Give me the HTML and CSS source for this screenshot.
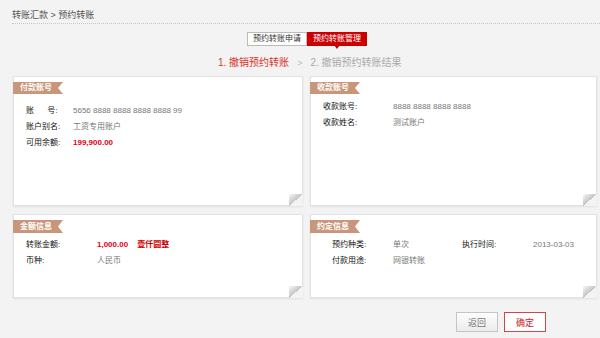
FILE: index.html
```html
<!DOCTYPE html>
<html lang="zh">
<head>
<meta charset="utf-8">
<title>预约转账</title>
<link rel="stylesheet" href="styles.css">
</head>
<body>
<div class="page">
  <div class="crumb">转账汇款 &gt; 预约转账</div>
  <div class="tabs">
    <span class="tab">预约转账申请</span>
    <span class="tab active">预约转账管理</span>
  </div>
  <div class="steps">
    <span class="cur">1. 撤销预约转账</span>
    <span class="sep">&gt;</span>
    <span>2. 撤销预约转账结果</span>
  </div>
  <div class="grid">
    <div class="card c1">
      <div class="ribbon">付款账号</div>
      <div class="rows">
        <div class="row"><span class="lab">账&nbsp;&nbsp;&nbsp;&nbsp;&nbsp;&nbsp;号:</span><span class="val">5656 8888 8888 8888 8888 99</span></div>
        <div class="row"><span class="lab">账户别名:</span><span class="val">工资专用账户</span></div>
        <div class="row"><span class="lab">可用余额:</span><span class="val red">199,900.00</span></div>
      </div>
    </div>
    <div class="card c2">
      <div class="ribbon">收款账号</div>
      <div class="rows">
        <div class="row"><span class="lab">收款账号:</span><span class="val">8888 8888 8888 8888</span></div>
        <div class="row"><span class="lab">收款姓名:</span><span class="val">测试账户</span></div>
      </div>
    </div>
    <div class="card c3">
      <div class="ribbon">金额信息</div>
      <div class="rows">
        <div class="row"><span class="lab">转账金额:</span><span class="val red">1,000.00</span><span class="val red cn">壹仟圆整</span></div>
        <div class="row"><span class="lab">币种:</span><span class="val">人民币</span></div>
      </div>
    </div>
    <div class="card c4">
      <div class="ribbon">约定信息</div>
      <div class="rows">
        <div class="row"><span class="lab">预约种类:</span><span class="val v1">单次</span><span class="lab">执行时间:</span><span class="val">2013-03-03</span></div>
        <div class="row"><span class="lab">付款用途:</span><span class="val v1">网银转账</span></div>
      </div>
    </div>
  </div>
  <div class="actions">
    <button class="btn back">返回</button>
    <button class="btn ok">确定</button>
  </div>
</div>
</body>
</html>
```
FILE: styles.css
```css
html, body {
  margin: 0;
  padding: 0;
  background: #f3f3f3;
}
body {
  font-family: "Liberation Sans", "Noto Sans CJK SC", sans-serif;
  width: 600px;
  height: 338px;
  overflow: hidden;
}
.page {
  display: flex;
  flex-direction: column;
}
.crumb {
  margin-left: 12px;
  height: 23px;
  line-height: 30px;
  font-size: 9px;
  color: #555;
  border-bottom: 1px dotted #c8c8c8;
}
.tabs {
  display: flex;
  margin: 8px 0 0 247px;
}
.tab {
  height: 12px;
  line-height: 12px;
  font-size: 8px;
  color: #333;
  background: #fff;
  border: 1px solid #bbb;
  padding: 0 5px;
  position: relative;
}
.tab.active {
  background: #cc0000;
  border-color: #cc0000;
  color: #fff;
}
.tab.active::after {
  content: "";
  position: absolute;
  left: 50%;
  bottom: -4px;
  margin-left: -3px;
  border-left: 3px solid transparent;
  border-right: 3px solid transparent;
  border-top: 4px solid #cc0000;
}
.steps {
  display: flex;
  gap: 8px;
  margin: 10px 0 0 218px;
  height: 14px;
  line-height: 14px;
  font-size: 10px;
  color: #aaa;
}
.steps .cur { color: #d8332a; }
.steps .sep { color: #bbb; font-size: 9px; }
.grid {
  display: grid;
  grid-template-columns: 290px 287px;
  grid-template-rows: 130px 84px;
  column-gap: 7px;
  row-gap: 8px;
  margin: 6px 0 0 13px;
}
.card {
  position: relative;
  background: #fff;
  border: 1px solid #e3e3e3;
  box-shadow: 0 1px 2px rgba(0,0,0,0.08);
  box-sizing: border-box;
  padding-top: 5px;
  font-size: 8px;
}
.card::after {
  content: "";
  position: absolute;
  right: -1px;
  bottom: -1px;
  width: 14px;
  height: 12px;
  background: linear-gradient(to top left, #f3f3f3 0, #f3f3f3 50%, #c4c4c4 50%, #e8e8e8 85%, #f9f9f9 100%);
}
.ribbon {
  width: 43px;
  height: 12px;
  line-height: 12px;
  margin-left: -1px;
  padding-left: 7px;
  background: #c8967b;
  color: #fff;
  font-weight: bold;
  font-size: 8px;
  clip-path: polygon(0 0, 100% 0, calc(100% - 5px) 50%, 100% 100%, 0 100%);
}
.rows {
  display: flex;
  flex-direction: column;
}
.row {
  display: flex;
  height: 16px;
  line-height: 16px;
  white-space: nowrap;
}
.lab {
  color: #111;
}
.val {
  color: #777;
}
.red {
  color: #e0001b;
  font-weight: bold;
}
.c1 .rows { margin: 9px 0 0 12px; }
.c1 .lab { width: 47px; }
.c2 .rows { margin: 5px 0 0 12px; }
.c2 .lab { width: 70px; }
.c3 .ribbon, .c4 .ribbon { height: 13px; line-height: 13px; }
.c3 .rows { margin: 4px 0 0 12px; }
.c3 .lab { width: 71px; }
.c3 .cn { margin-left: 9px; color: #cc0000; }
.c4 .rows { margin: 4px 0 0 21px; }
.c4 .lab { width: 61px; }
.c4 .v1 { width: 69px; }
.c4 .lab + .val + .lab { width: 71px; }
.actions {
  display: flex;
  justify-content: flex-end;
  gap: 6px;
  margin: 14px 54px 0 0;
}
.btn {
  width: 42px;
  height: 20px;
  padding: 0;
  font-family: "Liberation Sans", "Noto Sans CJK SC", sans-serif;
  font-size: 9px;
  cursor: pointer;
}
.btn.back {
  background: linear-gradient(#fdfdfd, #ececec);
  border: 1px solid #c4c4c4;
  color: #777;
}
.btn.ok {
  background: #fff;
  border: 1px solid #d0454a;
  color: #c8161d;
}
```
